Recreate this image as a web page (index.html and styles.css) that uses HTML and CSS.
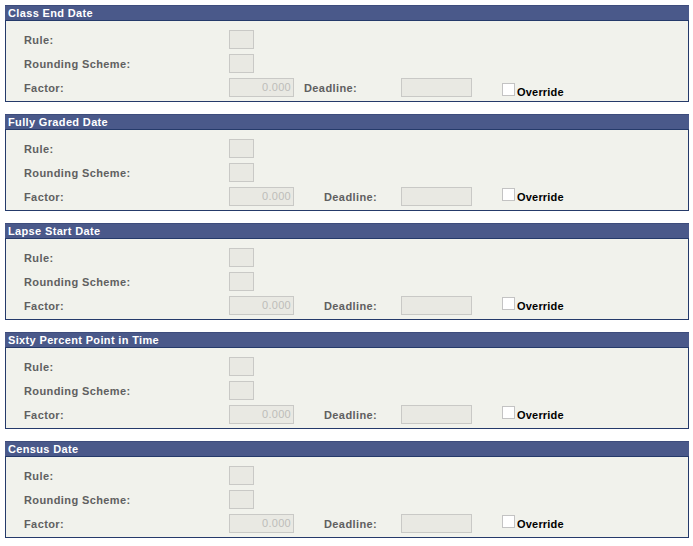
FILE: index.html
```html
<!DOCTYPE html>
<html>
<head>
<meta charset="utf-8">
<link rel="stylesheet" href="styles.css">
</head>
<body>
<div class="page">
  <section class="panel">
    <div class="panel-head">Class End Date</div>
    <div class="panel-body">
      <div class="row"><span class="label">Rule:</span><span class="box small"></span></div>
      <div class="row"><span class="label">Rounding Scheme:</span><span class="box small"></span></div>
      <div class="row"><span class="label">Factor:</span><span class="box factor">0.000</span><span class="label deadline first">Deadline:</span><span class="box dl"></span><label class="override first"><span class="check"></span><span>Override</span></label></div>
    </div>
  </section>
  <section class="panel">
    <div class="panel-head">Fully Graded Date</div>
    <div class="panel-body">
      <div class="row"><span class="label">Rule:</span><span class="box small"></span></div>
      <div class="row"><span class="label">Rounding Scheme:</span><span class="box small"></span></div>
      <div class="row"><span class="label">Factor:</span><span class="box factor">0.000</span><span class="label deadline">Deadline:</span><span class="box dl"></span><label class="override"><span class="check"></span><span>Override</span></label></div>
    </div>
  </section>
  <section class="panel">
    <div class="panel-head">Lapse Start Date</div>
    <div class="panel-body">
      <div class="row"><span class="label">Rule:</span><span class="box small"></span></div>
      <div class="row"><span class="label">Rounding Scheme:</span><span class="box small"></span></div>
      <div class="row"><span class="label">Factor:</span><span class="box factor">0.000</span><span class="label deadline">Deadline:</span><span class="box dl"></span><label class="override"><span class="check"></span><span>Override</span></label></div>
    </div>
  </section>
  <section class="panel">
    <div class="panel-head">Sixty Percent Point in Time</div>
    <div class="panel-body">
      <div class="row"><span class="label">Rule:</span><span class="box small"></span></div>
      <div class="row"><span class="label">Rounding Scheme:</span><span class="box small"></span></div>
      <div class="row"><span class="label">Factor:</span><span class="box factor">0.000</span><span class="label deadline">Deadline:</span><span class="box dl"></span><label class="override"><span class="check"></span><span>Override</span></label></div>
    </div>
  </section>
  <section class="panel">
    <div class="panel-head">Census Date</div>
    <div class="panel-body">
      <div class="row"><span class="label">Rule:</span><span class="box small"></span></div>
      <div class="row"><span class="label">Rounding Scheme:</span><span class="box small"></span></div>
      <div class="row"><span class="label">Factor:</span><span class="box factor">0.000</span><span class="label deadline">Deadline:</span><span class="box dl"></span><label class="override"><span class="check"></span><span>Override</span></label></div>
    </div>
  </section>
</div>
</body>
</html>
```
FILE: styles.css
```css
html, body {
  margin: 0;
  padding: 0;
  background: #ffffff;
}
body {
  font-family: "Liberation Sans", Arial, sans-serif;
  font-size: 11px;
}
.page {
  display: flex;
  flex-direction: column;
  gap: 12px;
  padding: 5px 0 0 5px;
  width: 684px;
}
.panel {
  box-sizing: border-box;
  width: 684px;
  height: 97px;
  border: 1px solid #253a6a;
  border-top: none;
  display: flex;
  flex-direction: column;
}
.panel-head {
  box-sizing: border-box;
  height: 16px;
  margin: 0 -1px;
  background: #4a598a;
  border-top: 1px solid #3d4c7c;
  border-bottom: 1px solid #253a6a;
  color: #ffffff;
  font-weight: bold;
  line-height: 14px;
  padding-left: 3px;
  letter-spacing: 0.35px;
}
.panel-body {
  flex: 1;
  background: #f1f2ec;
  padding: 9px 0 0 18px;
  display: flex;
  flex-direction: column;
  gap: 5px;
}
.row {
  display: flex;
  align-items: center;
  height: 19px;
}
.label {
  color: #606060;
  font-weight: bold;
  width: 205px;
  flex: none;
  letter-spacing: 0.4px;
}
.box {
  box-sizing: border-box;
  height: 19px;
  background: #e9e9e3;
  border: 1px solid #c9c9c6;
  flex: none;
}
.small { width: 25px; }
.factor {
  width: 65px;
  color: #bdbdba;
  text-align: right;
  line-height: 17px;
  padding-right: 2px;
  font-size: 11px;
  letter-spacing: 0.3px;
}
.deadline {
  width: 77px;
  margin-left: 30px;
}
.deadline.first {
  width: 97px;
  margin-left: 10px;
}
.dl { width: 71px; }
.override {
  align-self: flex-start;
  display: flex;
  align-items: baseline;
  margin-left: 30px;
  margin-top: 1px;
  font-weight: bold;
  color: #000000;
  letter-spacing: 0.2px;
}
.override.first {
  margin-top: 5px;
}
.check {
  box-sizing: border-box;
  width: 13px;
  height: 13px;
  background: #ffffff;
  border: 1px solid #c3c3c3;
  margin-right: 2px;
}
```
